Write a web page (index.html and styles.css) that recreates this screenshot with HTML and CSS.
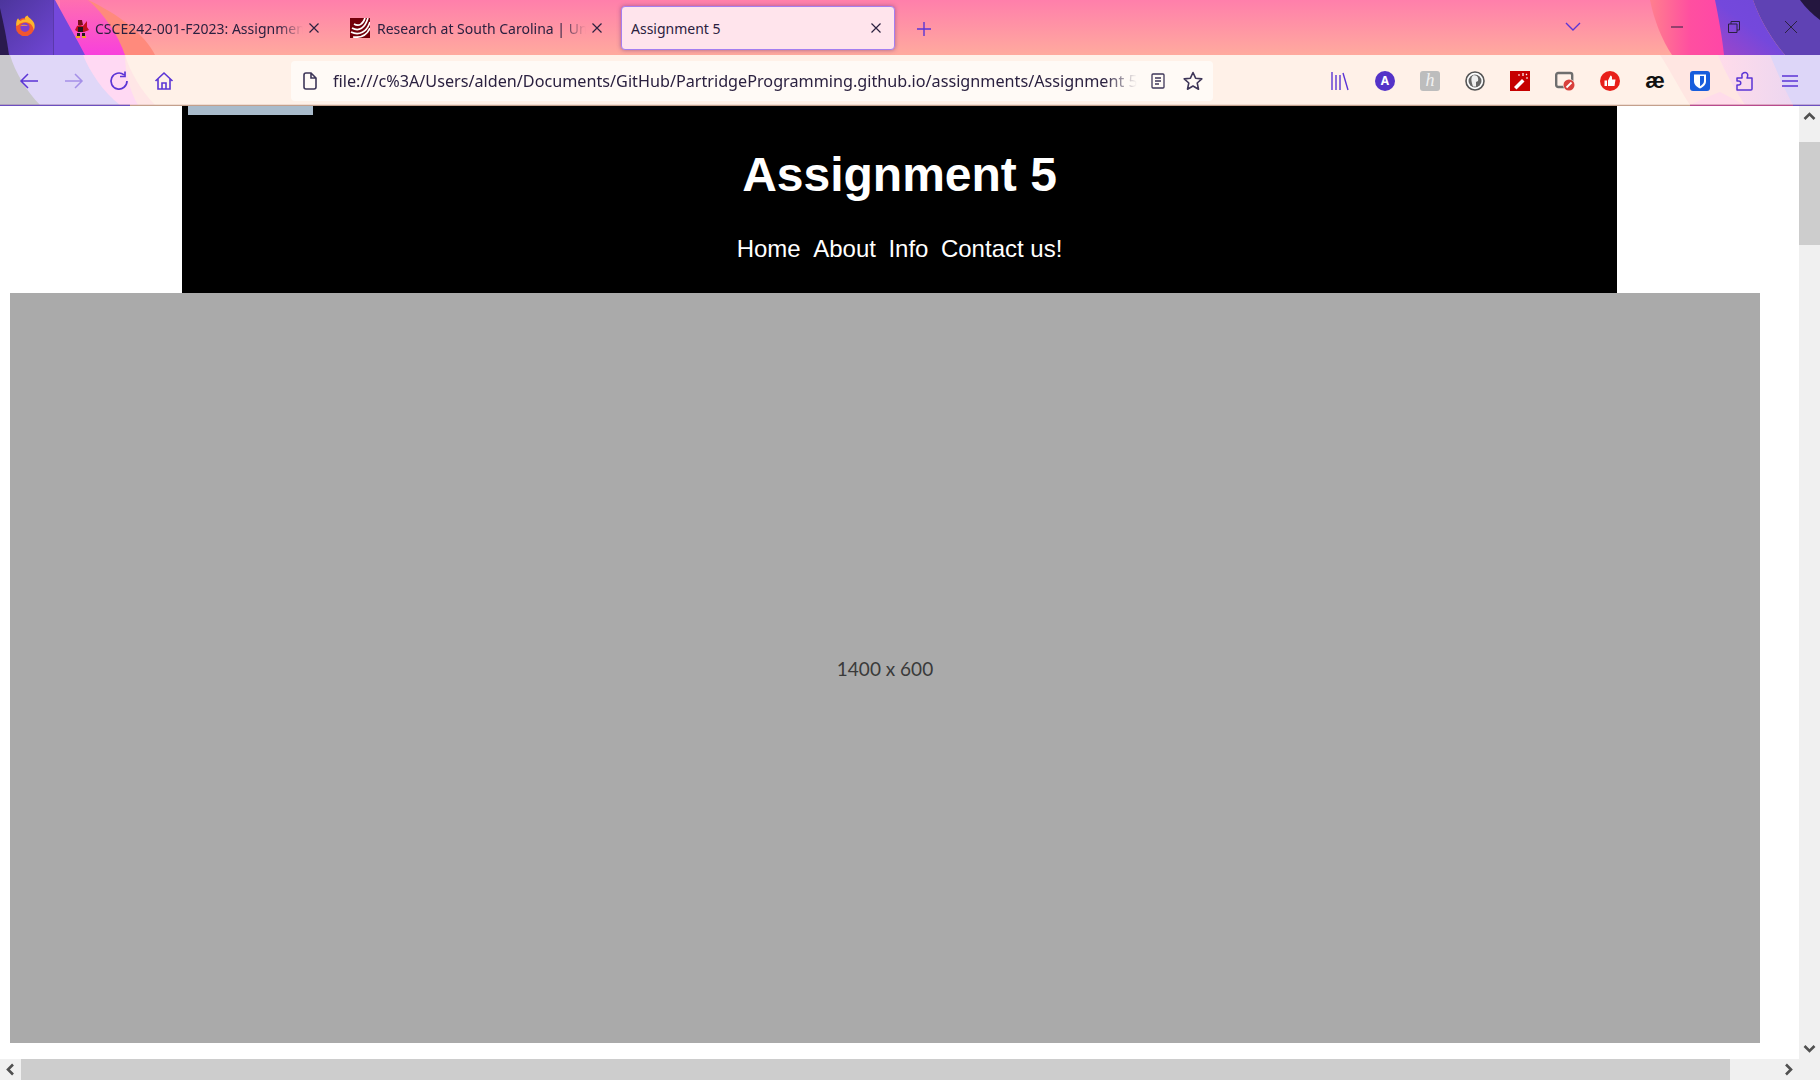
FILE: index.html
```html
<!DOCTYPE html>
<html lang="en">
<head>
    <meta charset="UTF-8">
    <meta name="viewport" content="width=device-width, initial-scale=1.0">
    <title>Assignment 5</title>
    <link rel="stylesheet" href="styles.css">
</head>
<body>
    <div class="browser">
        <svg class="chrome_art" width="1820" height="106" viewBox="0 0 1820 106">
            <defs>
                <linearGradient id="skyPink" x1="0" y1="0" x2="0" y2="1">
                    <stop offset="0" stop-color="#ff7fab"/>
                    <stop offset="1" stop-color="#ffaa9e"/>
                </linearGradient>
                <linearGradient id="magenta" x1="0" y1="0" x2="0" y2="1">
                    <stop offset="0" stop-color="#ff6fb0"/>
                    <stop offset="1" stop-color="#f840dc"/>
                </linearGradient>
                <linearGradient id="fxPurple" x1="0" y1="0" x2="1" y2="1">
                    <stop offset="0" stop-color="#4c359c"/>
                    <stop offset="1" stop-color="#7046d4"/>
                </linearGradient>
                <linearGradient id="hotPink" x1="0" y1="0" x2="1" y2="0">
                    <stop offset="0" stop-color="#ff7f8e"/>
                    <stop offset="0.5" stop-color="#ff4fa0"/>
                    <stop offset="1" stop-color="#ff45a8"/>
                </linearGradient>
                <linearGradient id="purpleRight" x1="0" y1="1" x2="1" y2="0">
                    <stop offset="0" stop-color="#a045c8"/>
                    <stop offset="0.5" stop-color="#7448dc"/>
                    <stop offset="1" stop-color="#7048d8"/>
                </linearGradient>
                <linearGradient id="navPink" x1="0" y1="0" x2="1" y2="0">
                    <stop offset="0" stop-color="#ffdcea"/>
                    <stop offset="1" stop-color="#e6d4f2"/>
                </linearGradient>
            </defs>
            <rect width="1820" height="55" fill="url(#skyPink)"/>
            <!-- left swirl -->
            <path d="M88 0 C120 15 145 35 155 55 H60 V0Z" fill="#ff8a7c"/>
            <path d="M88 0 C105 15 118 35 125 55 H60 V0Z" fill="url(#magenta)"/>
            <path d="M55 0 C66 20 76 38 85 55 H53 V0Z" fill="#7448dc"/>
            <rect width="53" height="55" fill="url(#fxPurple)"/>
            <path d="M0 8 C4 25 7 40 9 55 H0Z" fill="#2a1a4e"/>
            <!-- right swirl -->
            <path d="M1650 0 C1654 20 1662 40 1672 55 H1730 V0Z" fill="url(#hotPink)"/>
            <path d="M1715 0 H1753 C1760 20 1772 40 1785 55 H1724 C1722 35 1718 15 1715 0Z" fill="url(#purpleRight)"/>
            <path d="M1753 0 H1820 V55 H1785 C1772 40 1760 20 1753 0Z" fill="#5f42b4"/>
            <path d="M1800 0 H1820 V20 C1812 14 1806 8 1800 0Z" fill="#24163f"/>
            <!-- toolbar row -->
            <rect y="55" width="1820" height="50" fill="#fff1e8"/>
            <path d="M0 55 H125 C130 72 142 92 155 105 H0Z" fill="#ffe6e6"/>
            <path d="M0 55 H125 C125 72 130 92 138 105 H0Z" fill="#ffd9f3"/>
            <path d="M0 55 H83 C90 72 103 92 120 105 H0Z" fill="#e0d7f8"/>
            <path d="M0 55 H10 C15 72 27 92 40 105 H0Z" fill="#c9c8cc"/>
            <path d="M1660 55 H1820 V105 H1690 C1680 90 1670 70 1660 55Z" fill="#ffe6e2"/>
            <path d="M1718 55 H1820 V105 H1745 C1735 90 1725 72 1718 55Z" fill="url(#navPink)"/>
            <path d="M1690 105 C1700 100 1705 98 1720 92 L1745 105Z" fill="#ffdcea"/>
            <path d="M1770 55 H1820 V105 H1793 C1785 90 1777 72 1770 55Z" fill="#ddd6f8"/>
            <!-- bottom edge of the toolbar -->
            <path d="M0 105.500 H1820" stroke="#c4a08c" stroke-width="1.500"/>
            <path d="M0 105.500 H130" stroke="#6c4fc0" stroke-width="1.500"/>
            <path d="M1690 105.500 H1793" stroke="#b84a8e" stroke-width="1.500"/>
            <path d="M1793 105.500 H1820" stroke="#6c4fc0" stroke-width="1.500"/>
        </svg>

        <div class="tabbar">
            <div class="fx_btn">
                <svg width="22" height="22" viewBox="0 0 24 24">
                    <circle cx="12" cy="13" r="10" fill="#f0562f"/>
                    <path d="M2.500 12 C2 8 3 5 4.500 3.500 C5 5 6 6 7.500 6.500 C9 4.500 11 5 12.500 5 C11 2.500 13 1 15 0.500 C15 3 20 4 22 9 C23 12 22.500 15 21.500 17 C21 12 18 8 13 8 C9 8 6 9 5 11Z" fill="#fdb52c"/>
                    <circle cx="12" cy="13.500" r="5" fill="#7a3fd0"/>
                    <path d="M7 12 C9 10 13 10 16 12 C14 11.500 10 12 7 12Z" fill="#f9a03a"/>
                </svg>
            </div>
            <div class="tab tab_one">
                <svg class="favicon" width="18" height="20" viewBox="0 0 18 20">
                    <path d="M5 8 L8 7 L11 8 L15 3 L15 9 L17 12 L12 14 H6 L3 12Z" fill="#c2101c"/>
                    <path d="M6 2 H10 L11 7 H6Z" fill="#7a1018"/>
                    <path d="M6 9 H11 V14 H6Z" fill="#24181c"/>
                    <path d="M5 15 H8 V18 H5Z M10 15 H13 V18 H10Z" fill="#24181c"/>
                    <path d="M4 18 H8 V20 H4Z M10 18 H14 V20 H10Z" fill="#e8a820"/>
                </svg>
                <span class="tab_title">CSCE242-001-F2023: Assignmen</span>
                <span class="tab_close">
                    <svg width="10" height="10" viewBox="0 0 10 10"><path d="M0.500 0.500 L9.500 9.500 M9.500 0.500 L0.500 9.500" stroke="#2b2140" stroke-width="1.200"/></svg>
                </span>
            </div>
            <div class="tab tab_two">
                <svg class="favicon fav_usc" width="20" height="20" viewBox="0 0 20 20">
                    <rect width="20" height="20" fill="#73000a"/>
                    <path d="M4 6 C9 9 13 6 15 0 M2 10 C9 14 15 10 18 0 M1 14 C9 18 17 14 20 4 M3 19 C11 20 17 17 20 10" fill="none" stroke="#fff" stroke-width="1.700"/>
                </svg>
                <span class="tab_title">Research at South Carolina | Uni</span>
                <span class="tab_close">
                    <svg width="10" height="10" viewBox="0 0 10 10"><path d="M0.500 0.500 L9.500 9.500 M9.500 0.500 L0.500 9.500" stroke="#2b2140" stroke-width="1.200"/></svg>
                </span>
            </div>
            <div class="tab tab_active">
                <span class="tab_title">Assignment 5</span>
                <span class="tab_close">
                    <svg width="10" height="10" viewBox="0 0 10 10"><path d="M0.500 0.500 L9.500 9.500 M9.500 0.500 L0.500 9.500" stroke="#2b2140" stroke-width="1.200"/></svg>
                </span>
            </div>
            <div class="tab_new">
                <svg width="16" height="16" viewBox="0 0 16 16"><path d="M8 1 V15 M1 8 H15" stroke="#5b35d5" stroke-width="1.400"/></svg>
            </div>
            <div class="tab_spacer"></div>
            <svg class="tab_list" width="16" height="10" viewBox="0 0 16 10"><path d="M1 1 L8 8 L15 1" fill="none" stroke="#5b35d5" stroke-width="1.400"/></svg>
            <div class="win_btns">
                <svg width="12" height="2" viewBox="0 0 12 2"><path d="M0 1 H12" stroke="#2b2140" stroke-width="1"/></svg>
                <svg width="12" height="12" viewBox="0 0 12 12"><path d="M3 3 V0.500 H11.500 V9 H9 M0.500 3 H9 V11.500 H0.500Z" fill="none" stroke="#2b2140" stroke-width="1"/></svg>
                <svg width="12" height="12" viewBox="0 0 12 12"><path d="M0 0 L12 12 M12 0 L0 12" stroke="#2b2140" stroke-width="1"/></svg>
            </div>
        </div>

        <div class="navbar">
            <div class="nav_left">
                <svg width="20" height="20" viewBox="0 0 20 20"><path d="M19 10 H2 M9 3 L2 10 L9 17" fill="none" stroke="#5b35d5" stroke-width="1.500"/></svg>
                <svg width="20" height="20" viewBox="0 0 20 20"><path d="M1 10 H18 M11 3 L18 10 L11 17" fill="none" stroke="#a590e8" stroke-width="1.500"/></svg>
                <svg width="20" height="20" viewBox="0 0 20 20"><path d="M18 10 A8 8 0 1 1 15 3.800 M16 0.500 V5.500 H11" fill="none" stroke="#5b35d5" stroke-width="1.700"/></svg>
                <svg width="20" height="20" viewBox="0 0 20 20"><path d="M1.500 10 L10 2 L18.500 10 M4 8 V18 H16 V8 M8 18 V12 H12 V18" fill="none" stroke="#5b35d5" stroke-width="1.600"/></svg>
            </div>
            <div class="urlbar">
                <svg width="14" height="18" viewBox="0 0 14 18"><path d="M1 3 Q1 1 3 1 H8 L13 6 V15 Q13 17 11 17 H3 Q1 17 1 15Z M8 1 V6 H13" fill="none" stroke="#3e3658" stroke-width="1.600"/></svg>
                <span class="url_text">file:///c%3A/Users/alden/Documents/GitHub/PartridgeProgramming.github.io/assignments/Assignment 5/</span>
                <svg class="reader_icon" width="14" height="16" viewBox="0 0 14 16"><path d="M2 1 H12 Q13 1 13 2 V14 Q13 15 12 15 H2 Q1 15 1 14 V2 Q1 1 2 1Z M4 5 H10 M4 8 H10 M4 11 H8" fill="none" stroke="#3e3658" stroke-width="1.300"/></svg>
                <svg width="20" height="20" viewBox="0 0 20 20"><path d="M10 1.500 L12.600 7.200 L18.800 7.900 L14.200 12 L15.500 18.200 L10 15 L4.500 18.200 L5.800 12 L1.200 7.900 L7.400 7.200Z" fill="none" stroke="#3e3658" stroke-width="1.600" stroke-linejoin="round"/></svg>
            </div>
            <div class="nav_right">
                <svg width="20" height="20" viewBox="0 0 20 20"><path d="M2 1 V19 M6 4 V19 M10 4 V19 M13 2 L18 19" fill="none" stroke="#5b35d5" stroke-width="1.400"/></svg>
                <div class="ext ext_round ext_purple">A</div>
                <div class="ext ext_gray">h</div>
                <svg width="20" height="20" viewBox="0 0 20 20">
                    <circle cx="10" cy="10" r="9" fill="#fff" stroke="#555" stroke-width="1.600"/>
                    <circle cx="10" cy="10" r="6.500" fill="#666"/>
                    <path d="M8 4.500 C12 3.500 14 7 13 10 L11 11 V15.500 H8 C7 12 5 7 8 4.500Z" fill="#eee"/>
                </svg>
                <svg width="20" height="20" viewBox="0 0 20 20">
                    <rect width="20" height="20" fill="#c60000"/>
                    <path d="M4 16 L12 8 L14.500 10.500 L6.500 18.500Z" fill="#fff"/>
                    <path d="M8 4 H10 M13 2 V5 M16 4 L17 3 M16 7 H18" stroke="#fff" stroke-width="1.200"/>
                </svg>
                <svg width="20" height="20" viewBox="0 0 20 20">
                    <rect x="1.200" y="2" width="16" height="14" rx="2" fill="none" stroke="#6e6e6e" stroke-width="2.400"/>
                    <circle cx="14" cy="14" r="6" fill="#fff1e8"/>
                    <circle cx="14" cy="14" r="5.500" fill="#d8403c"/>
                    <path d="M11.500 16.500 L16.500 11.500" stroke="#fff" stroke-width="1.800"/>
                </svg>
                <svg width="20" height="20" viewBox="0 0 20 20">
                    <circle cx="10" cy="10" r="10" fill="#e8201a"/>
                    <path d="M4.500 9.500 H7 V15 H4.500Z M8 9.500 L10.500 4.500 Q12 4.500 12 6.500 V8.500 H15.500 L14.500 15 H8Z" fill="#fff"/>
                </svg>
                <div class="ext ext_ae">æ</div>
                <svg width="20" height="20" viewBox="0 0 20 20">
                    <rect width="20" height="20" rx="3" fill="#175ddc"/>
                    <path d="M4 3.500 H16 V10 C16 14 13 16 10 17.500 C7 16 4 14 4 10Z" fill="#fff"/>
                    <path d="M10 5 H14 V10 C14 12.500 12 14 10 15.200Z" fill="#175ddc"/>
                </svg>
                <svg width="20" height="20" viewBox="0 0 20 20"><path d="M2 7 H7 V5 C6 2 11 0 12.500 3 C13 4.500 12.500 6 12 7 H17 V18 Q17 19 16 19 H2 V14 H3.500 C6.500 14 6.500 10 3.500 10 H2Z" fill="none" stroke="#5b35d5" stroke-width="1.500" stroke-linejoin="round"/></svg>
                <svg width="20" height="14" viewBox="0 0 20 14"><path d="M2 2 H18 M2 7 H18 M2 12 H18" stroke="#5b35d5" stroke-width="1.400"/></svg>
            </div>
        </div>

        <div class="viewport">
            <div class="page_row">
                <div class="page">
                    <div class="header">
                        <div class="skip_bar"></div>
                        <h1>Assignment 5</h1>
                        <nav class="main_nav">
                            <a>Home</a>
                            <a>About</a>
                            <a>Info</a>
                            <a>Contact us!</a>
                        </nav>
                    </div>
                    <div class="placeholder">1400 x 600</div>
                </div>
                <div class="scroll_v">
                    <svg width="21" height="21" viewBox="0 0 21 21"><path d="M5.500 13 L10.500 8 L15.500 13" fill="none" stroke="#505050" stroke-width="2.600"/></svg>
                    <div class="scroll_v_track"><div class="scroll_v_thumb"></div></div>
                    <svg width="21" height="21" viewBox="0 0 21 21"><path d="M5.500 8 L10.500 13 L15.500 8" fill="none" stroke="#505050" stroke-width="2.600"/></svg>
                </div>
            </div>
            <div class="scroll_h">
                <svg width="21" height="21" viewBox="0 0 21 21"><path d="M13 5.500 L8 10.500 L13 15.500" fill="none" stroke="#505050" stroke-width="2.600"/></svg>
                <div class="scroll_h_thumb"></div>
                <div class="scroll_h_rest">
                    <svg width="21" height="21" viewBox="0 0 21 21"><path d="M8 5.500 L13 10.500 L8 15.500" fill="none" stroke="#505050" stroke-width="2.600"/></svg>
                </div>
            </div>
        </div>
    </div>
</body>
</html>
```

FILE: styles.css
```css
html, body, * {
    box-sizing: border-box;
    margin: 0;
    padding: 0;
}
html, body {
    overflow: hidden;
}
body {
    font-family: "Noto Sans", sans-serif;
    background-color: #fff;
    color: #2b2140;
}
.browser {
    position: relative;
    width: 1820px;
    height: 1080px;
    display: flex;
    flex-direction: column;
}
.chrome_art {
    position: absolute;
    top: 0;
    left: 0;
    display: block;
}

/* tab row */
.tabbar {
    position: relative;
    height: 55px;
    display: flex;
    align-items: center;
}
.fx_btn {
    width: 54px;
    height: 55px;
    padding: 15px 0 0 14px;
    border-right: 1px solid #5a39ab;
}
.tab {
    display: flex;
    align-items: center;
    height: 44px;
    font-size: 14px;
    margin-top: 1px;
}
.favicon {
    flex: none;
    margin-right: 5px;
}
.fav_usc {
    margin-right: 7px;
}
.tab_title {
    flex: 1;
    overflow: hidden;
    white-space: nowrap;
    -webkit-mask-image: linear-gradient(to right, #000 88%, transparent 100%);
    mask-image: linear-gradient(to right, #000 88%, transparent 100%);
}
.tab_close {
    flex: none;
    display: flex;
    align-items: center;
    justify-content: center;
    width: 14px;
    margin-left: 4px;
}
.tab_one {
    width: 249px;
    margin-left: 18px;
}
.tab_two {
    width: 254px;
    margin-left: 29px;
}
.tab_active {
    width: 274px;
    margin-left: 17px;
    padding: 0 11px 0 9px;
    background-color: #ffe4ec;
    border: 1px solid #a57ff0;
    border-radius: 4px;
    box-shadow: 0 0 4px rgba(80, 40, 120, 0.5);
}
.tab_active .tab_title {
    -webkit-mask-image: none;
    mask-image: none;
}
.tab_new {
    width: 16px;
    height: 16px;
    margin: 1px 0 0 21px;
}
.tab_spacer {
    flex: 1;
}
.tab_list {
    margin: 0 90px 2px 0;
}
.win_btns {
    display: flex;
    align-items: center;
    justify-content: space-between;
    width: 126px;
    margin: 0 23px 2px 0;
}

/* toolbar row */
.navbar {
    position: relative;
    height: 51px;
    display: flex;
    align-items: center;
}
.nav_left {
    width: 291px;
    display: flex;
    align-items: center;
    gap: 25px;
    padding-left: 19px;
}
.urlbar {
    width: 922px;
    height: 40px;
    display: flex;
    align-items: center;
    gap: 11px;
    padding: 0 10px 0 12px;
    border-radius: 4px;
    background-color: #fffaf6;
}
.url_text {
    flex: 1;
    overflow: hidden;
    white-space: nowrap;
    font-size: 16.2px;
    line-height: 22px;
    margin: 1px 3px 0 5px;
    -webkit-mask-image: linear-gradient(to right, #000 96%, transparent 100%);
    mask-image: linear-gradient(to right, #000 96%, transparent 100%);
}
.reader_icon {
    margin-right: 7px;
}
.nav_right {
    flex: 1;
    display: flex;
    align-items: center;
    gap: 25px;
    padding-left: 117px;
}
.ext {
    width: 20px;
    height: 20px;
    display: flex;
    align-items: center;
    justify-content: center;
    font-weight: bold;
    font-size: 12px;
}
.ext_round {
    border-radius: 50%;
}
.ext_purple {
    background-color: #5433c8;
    color: #fff;
}
.ext_gray {
    background-color: #bdbdbd;
    border-radius: 3px;
    color: #f1f1f1;
    font-family: "Liberation Serif", serif;
    font-style: italic;
    font-weight: normal;
    font-size: 18px;
}
.ext_ae {
    color: #111;
    font-size: 22px;
    font-family: "Liberation Sans", sans-serif;
}

/* page content */
.viewport {
    position: relative;
    flex: 1;
    display: flex;
    flex-direction: column;
    min-height: 0;
    background-color: #fff;
}
.page_row {
    flex: 1;
    display: flex;
    min-height: 0;
}
.page {
    flex: 1;
    min-width: 0;
    overflow: hidden;
}
.header {
    position: relative;
    width: 1435px;
    height: 187px;
    margin-left: 182px;
    background-color: #000;
    color: #fff;
    text-align: center;
    font-family: "Liberation Sans", Arial, sans-serif;
}
.skip_bar {
    position: absolute;
    top: 0;
    left: 6px;
    width: 125px;
    height: 9px;
    background-color: #a9bbcb;
}
.header h1 {
    font-size: 48px;
    line-height: 58px;
    padding-top: 40px;
}
.main_nav {
    display: flex;
    justify-content: center;
    gap: 12.5px;
    margin-top: 30px;
    font-size: 24px;
    line-height: 29px;
}
.placeholder {
    width: 1750px;
    height: 750px;
    margin-left: 10px;
    display: flex;
    align-items: center;
    justify-content: center;
    background-color: #aaa;
    color: #3a3a3a;
    font-family: "Lato", sans-serif;
    font-size: 19px;
}
.scroll_v {
    width: 21px;
    flex: none;
    display: flex;
    flex-direction: column;
    background-color: #f0f0f0;
}
.scroll_v_track {
    flex: 1;
    padding-top: 15px;
}
.scroll_v_thumb {
    height: 103px;
    background-color: #cdcdcd;
}
.scroll_h {
    height: 21px;
    flex: none;
    display: flex;
    background-color: #f0f0f0;
}
.scroll_h_thumb {
    width: 1709px;
    background-color: #cdcdcd;
}
.scroll_h_rest {
    flex: 1;
    display: flex;
    justify-content: flex-end;
    padding-right: 21px;
}
```
